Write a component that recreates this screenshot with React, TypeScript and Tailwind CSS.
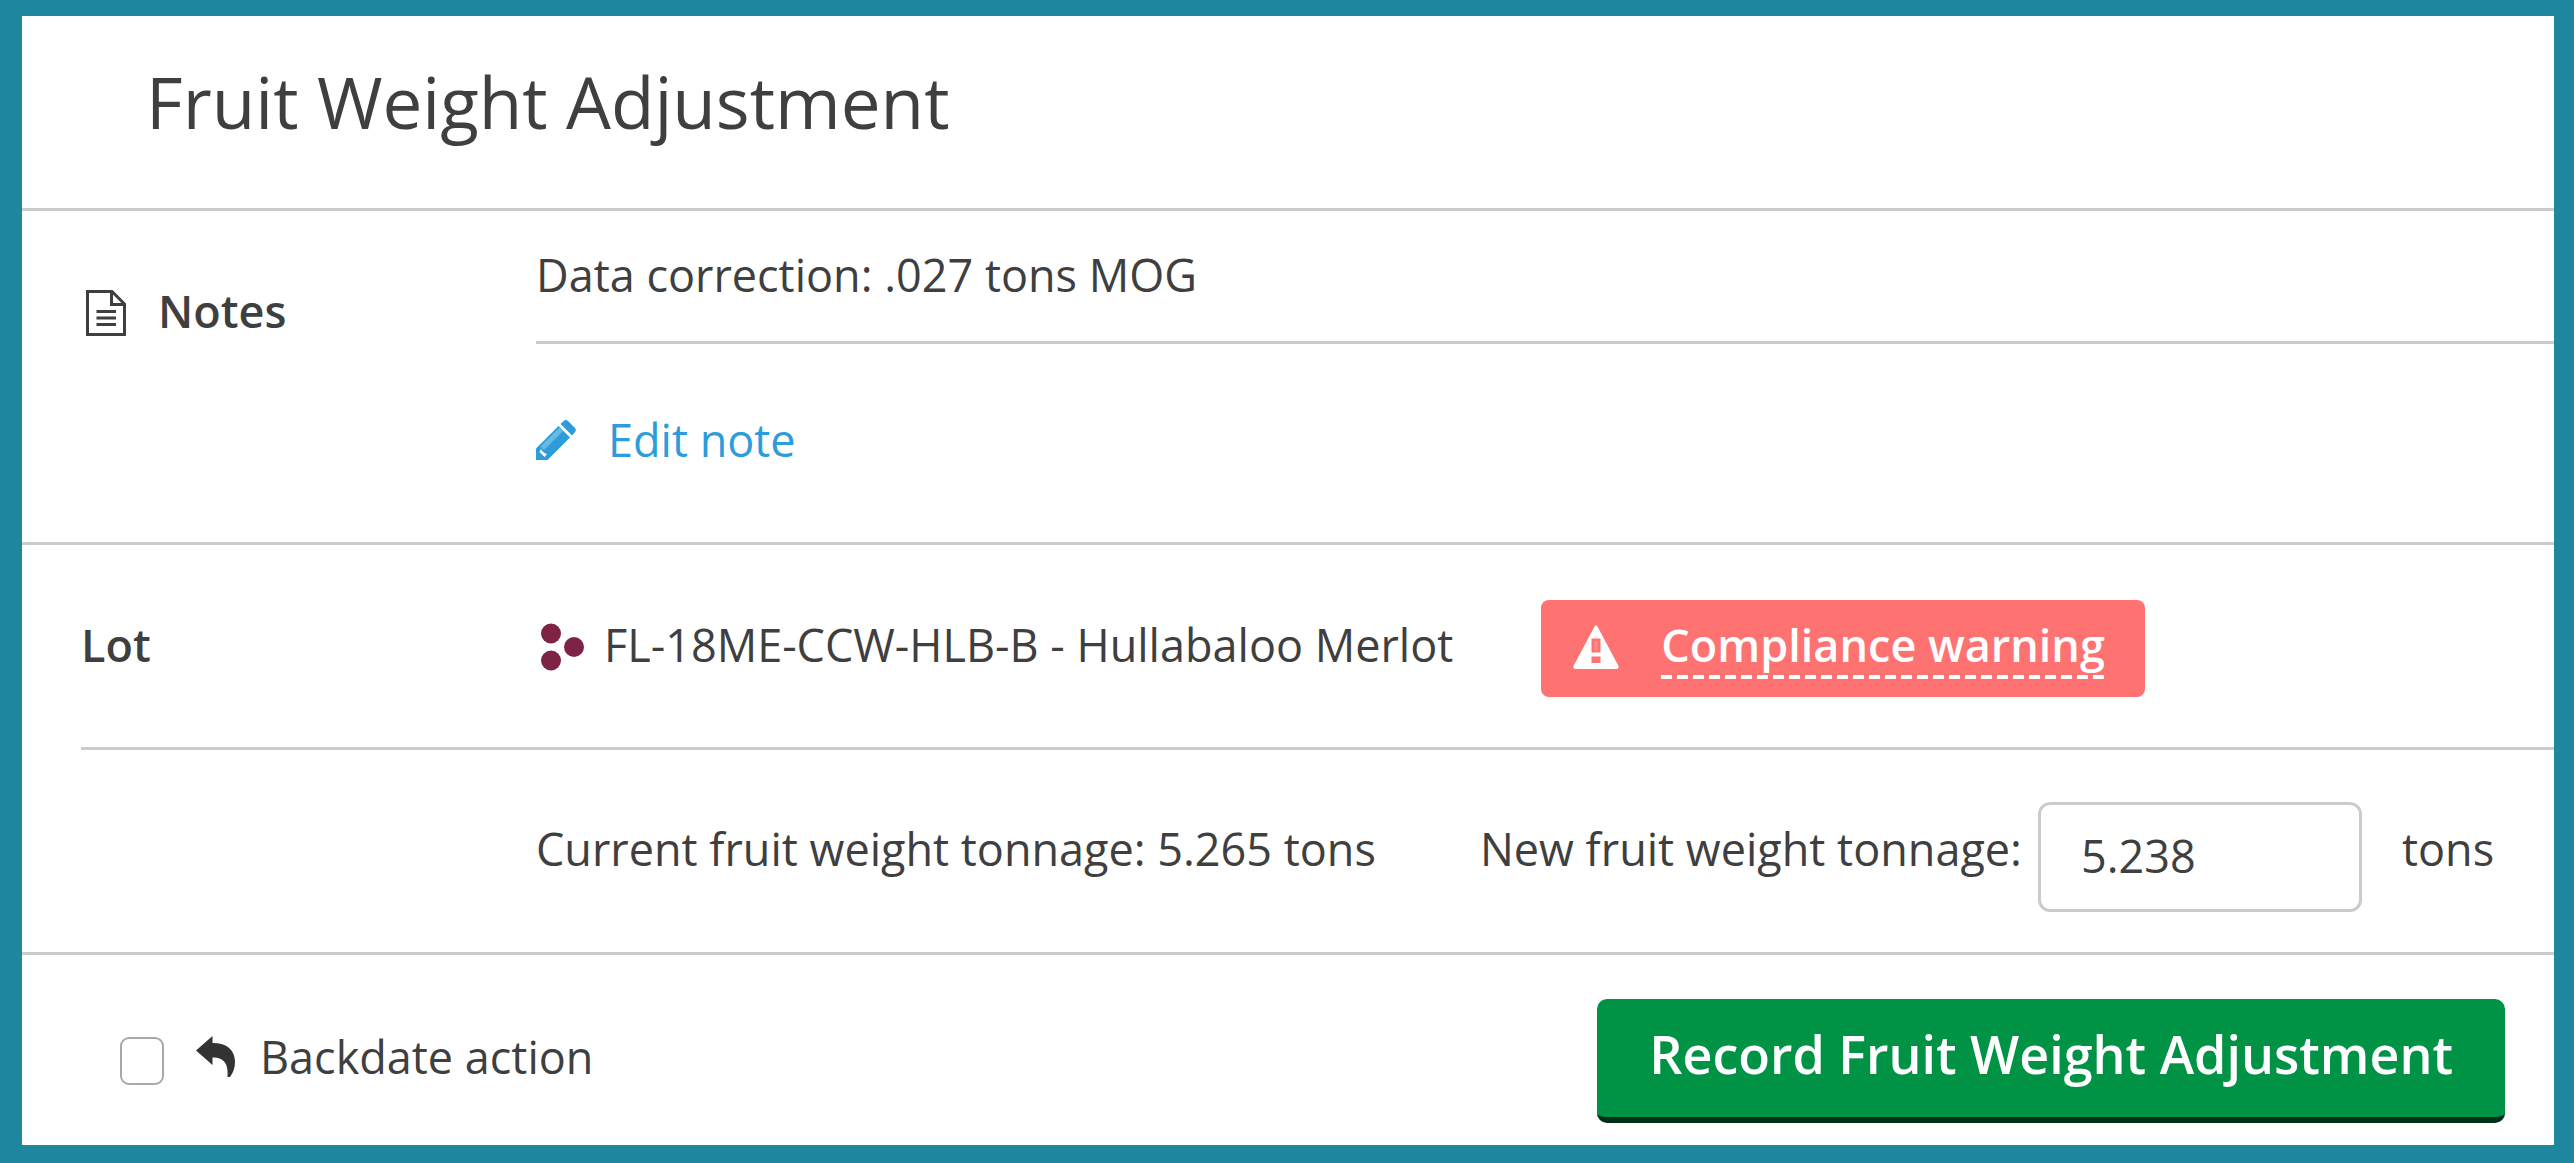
import React, { useState } from 'react';

const NoteIcon = () => (
  <svg viewBox="0 0 40 46" className="h-[46px] w-10 shrink-0" fill="none" stroke="#3f3f3f" strokeWidth="3" aria-hidden="true">
    <path d="M1.5 1.5H26L38.5 14V44.5H1.5Z" />
    <path d="M25.5 1.5V14.5H38.5" />
    <path d="M10.5 21.5H30M10.5 28H30M10.5 34.5H30" />
  </svg>
);

const PencilIcon = () => (
  <svg viewBox="0 0 40 40" className="size-10 shrink-0" aria-hidden="true">
    <path fill="#2d9cdb" d="M0 40V28.500L22.500 6L34 17.500L11.500 40Z" />
    <path fill="#6bb8e4" d="M4.500 26.500L23.500 7.500L27 11L8 30Z" />
    <path fill="#2d9cdb" d="M24.500 4L28 0.700Q30 -0.800 32 0.900L39 8Q40.600 10 39 12L36 15.500Z" />
    <path fill="#fff" d="M5 29Q6.500 32.500 11 34L8.500 37L3.500 32Z" />
  </svg>
);

const LotIcon = () => (
  <svg viewBox="0 0 44 48" className="h-12 w-11 shrink-0" fill="#7f2346" aria-hidden="true">
    <circle cx="11" cy="10.500" r="10" />
    <circle cx="34" cy="24" r="10" />
    <circle cx="11" cy="37.500" r="10" />
  </svg>
);

const WarningIcon = () => (
  <svg viewBox="0 0 46 44" className="h-11 w-[46px] shrink-0" aria-hidden="true">
    <path fill="#fff" d="M21.500 1.500Q23 -0.800 24.500 1.500L45.500 41Q46 44 43.500 44H2.500Q0 44 0.500 41Z" />
    <path fill="#ff7272" d="M18.500 13.500H27.500V27.500H18.500ZM18.500 31.500H27.500V38H18.500Z" />
    <path fill="#fff" d="M21.500 16H24.500V25.500H21.500Z" opacity="0.2" />
  </svg>
);

const BackdateIcon = () => (
  <svg viewBox="0 0 40 42" className="h-[42px] w-10 shrink-0" fill="#333" aria-hidden="true">
    <path d="M0 14.500L16.500 0V7C31 7 39 14 39 26C39 32 37 37 34 41H31.500C32.500 29 29 21.500 16.500 21.500V29Z" />
  </svg>
);

const App: React.FC = () => {
  const [tonnage, setTonnage] = useState('5.238');
  const [backdate, setBackdate] = useState(false);

  return (
    <div className="min-h-screen bg-[#1f869f] pt-4 pr-5 pb-4 pl-[22px] font-['Open_Sans',sans-serif] text-[45px] leading-[60px] text-[#3f3f3f]">
      <main className="bg-white">
        <header className="border-b-3 border-[#cbcbcb] pt-9 pb-14 pl-[124px]">
          <h1 className="text-[71px] leading-[100px]">Fruit Weight Adjustment</h1>
        </header>

        <section className="flex border-b-3 border-[#cbcbcb]">
          <div className="flex w-[514px] shrink-0 items-center gap-8 self-start pt-[70px] pl-16">
            <NoteIcon />
            <h2 className="pb-1 font-semibold">Notes</h2>
          </div>
          <div className="flex-1">
            <p className="border-b-3 border-[#cbcbcb] pt-[34px] pb-9">Data correction: .027 tons MOG</p>
            <button type="button" className="mt-[66px] mb-18 flex items-center gap-8 text-[#2d9cdb]">
              <PencilIcon />
              Edit note
            </button>
          </div>
        </section>

        <section className="border-b-3 border-[#cbcbcb]">
          <div className="ml-[59px] flex items-center border-b-3 border-[#cbcbcb] pt-[55px] pb-[50px]">
            <h2 className="w-[455px] shrink-0 pb-2 font-semibold">Lot</h2>
            <div className="flex items-center gap-5 pb-1 pl-1">
              <LotIcon />
              <span className="pb-1">FL-18ME-CCW-HLB-B - Hullabaloo Merlot</span>
            </div>
            <button type="button" className="ml-22 flex h-[97px] items-center gap-[42px] rounded-lg bg-[#ff7272] pr-10 pb-1 pl-8 text-white">
              <WarningIcon />
              <span className="bg-[repeating-linear-gradient(90deg,#fff_0_11px,transparent_11px_16px)] bg-[length:100%_4px] bg-bottom bg-no-repeat pb-1 font-semibold">
                Compliance warning
              </span>
            </button>
          </div>
          <div className="flex items-center pt-[52px] pb-10 pl-[514px]">
            <span className="pb-4">Current fruit weight tonnage: 5.265 tons</span>
            <label htmlFor="tonnage" className="ml-26 pb-4">New fruit weight tonnage:</label>
            <input
              id="tonnage"
              type="text"
              value={tonnage}
              onChange={(e) => setTonnage(e.target.value)}
              className="ml-4 h-[110px] w-[324px] rounded-xl border-3 border-[#cbcbcb] px-10 pb-1"
            />
            <span className="ml-10 pb-4">tons</span>
          </div>
        </section>

        <footer className="flex items-center justify-between pt-11 pr-[49px] pb-[22px] pl-[98px]">
          <label className="flex items-center">
            <input
              type="checkbox"
              checked={backdate}
              onChange={(e) => setBackdate(e.target.checked)}
              className="h-12 w-11 appearance-none rounded-[9px] border-2 border-[#a8a8a8] checked:bg-[#1f869f]"
            />
            <span className="ml-8 pb-2"><BackdateIcon /></span>
            <span className="ml-6 pb-2">Backdate action</span>
          </label>
          <button type="button" className="h-[124px] rounded-[10px] border-b-6 border-[#00301a] bg-[#009245] px-[52px] pb-2 text-[52px] font-semibold text-white">
            Record Fruit Weight Adjustment
          </button>
        </footer>
      </main>
    </div>
  );
};

export default App;
